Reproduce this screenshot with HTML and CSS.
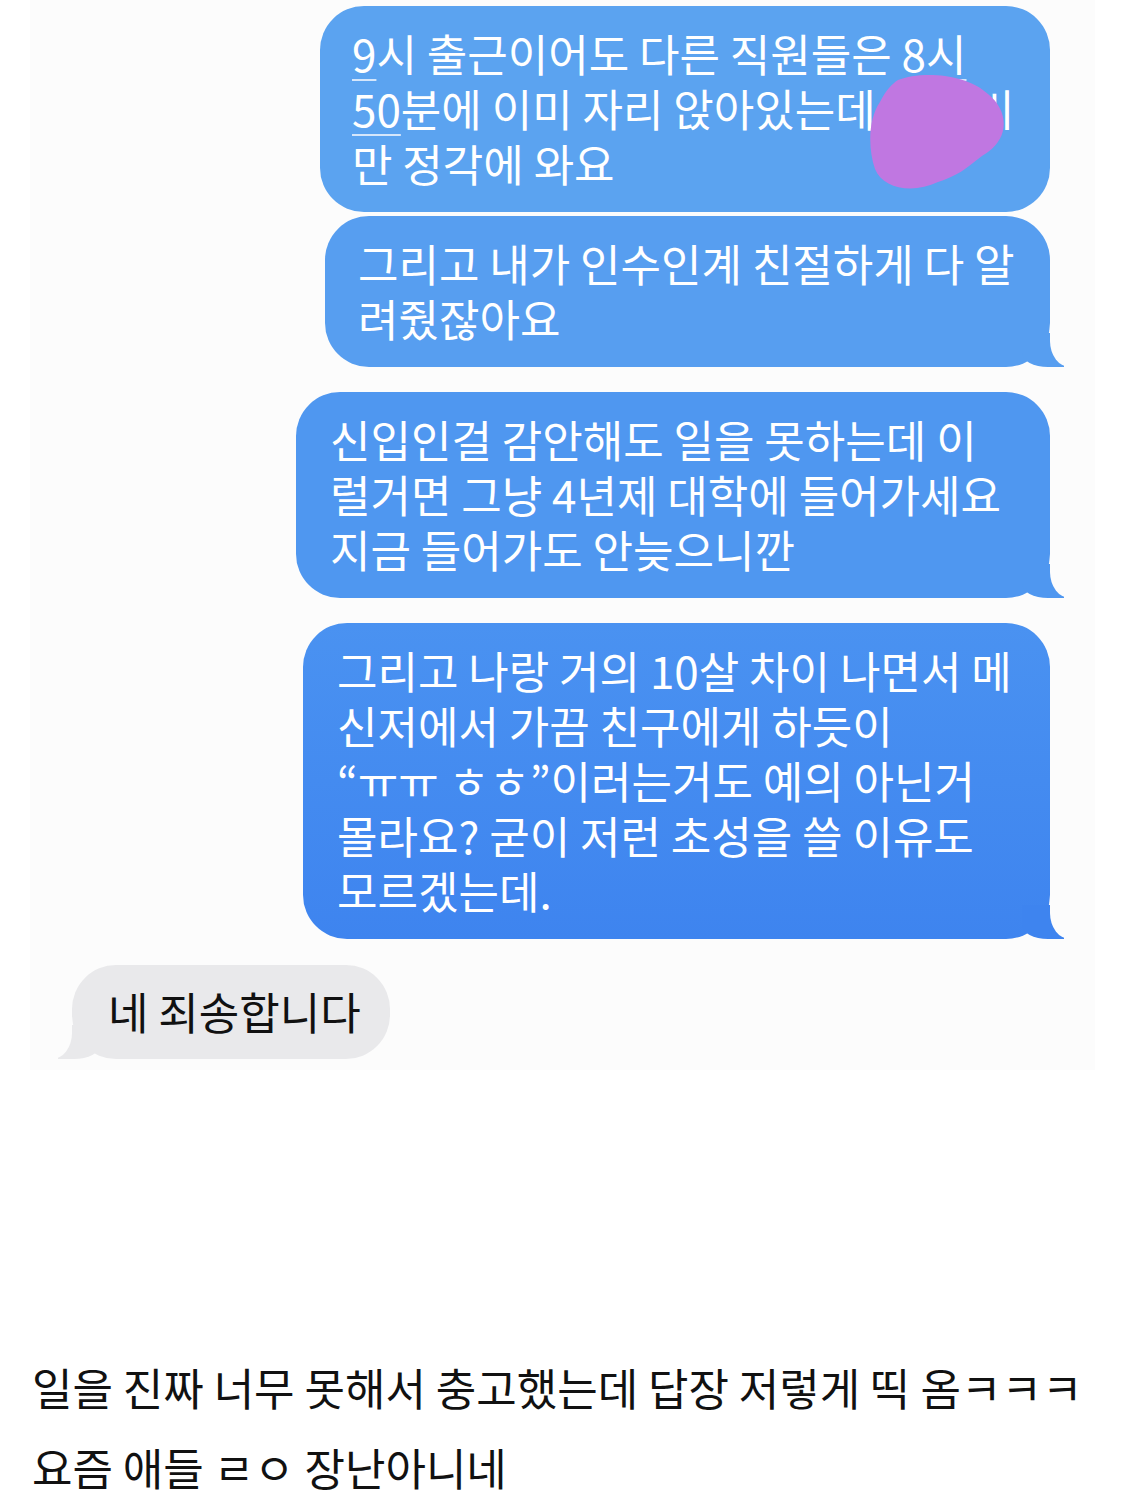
FILE: index.html
```html
<!DOCTYPE html>
<html>
<head>
    <title>메시지</title>
    <link rel="stylesheet" href="styles.css">
</head>
<body>
    <div class="shot">
        <div class="thread">
            <div class="bubble me m1">
                <span class="link">9</span>시 출근이어도 다른 직원들은 <span class="link">8시</span><br>
                <span class="link">50</span>분에 이미 자리 앉아있는데 ○○씨<br>
                만 정각에 와요
                <svg class="blot" width="140" height="124" viewBox="0 0 140 124">
                    <path d="M30 6 C52 -3 98 -1 120 20 C140 36 142 62 120 78 C104 88 96 100 70 108 C45 120 15 115 7 95 C0 75 0 45 12 28 C18 16 24 10 30 6 Z" fill="#c077e1"/>
                </svg>
            </div>
            <div class="bubble me m2 tail">
                그리고 내가 인수인계 친절하게 다 알<br>
                려줬잖아요
            </div>
            <div class="bubble me m3 tail">
                신입인걸 감안해도 일을 못하는데 이<br>
                럴거면 그냥 4년제 대학에 들어가세요<br>
                지금 들어가도 안늦으니깐
            </div>
            <div class="bubble me m4 tail">
                그리고 나랑 거의 10살 차이 나면서 메<br>
                신저에서 가끔 친구에게 하듯이<br>
                “ㅠㅠ ㅎㅎ”이러는거도 예의 아닌거<br>
                몰라요? 굳이 저런 초성을 쓸 이유도<br>
                모르겠는데.
            </div>
            <div class="bubble them">네 죄송합니다</div>
        </div>
    </div>

    <p class="caption">
        일을 진짜 너무 못해서 충고했는데 답장 저렇게 띡 옴ㅋㅋㅋ<br>
        요즘 애들 ㄹㅇ 장난아니네
    </p>
</body>
</html>
```

FILE: styles.css
```css
body {
    margin: 0;
    background-color: #fff;
    font-family: "Noto Sans CJK KR", "Noto Sans", sans-serif;
}

.shot {
    margin: 0 30px;
    height: 1070px;
    background-color: #fcfcfc;
}

.thread {
    display: flex;
    flex-direction: column;
    align-items: flex-end;
    padding: 6px 45px 0 42px;
}

.bubble {
    position: relative;
    box-sizing: border-box;
    font-size: 44px;
    line-height: 55px;
    white-space: nowrap;
    border-radius: 44px;
    padding: 20px 20px 21px 33px;
}

.me {
    color: #fff;
    --tail: #579ef0;
}

.m1 {
    width: 730px;
    background-color: #5ba3f0;
    padding-left: 32px;
}

.m2 {
    width: 725px;
    margin-top: 4px;
    background-color: #579ef0;
}

.m3 {
    width: 754px;
    margin-top: 25px;
    background-color: #4f97f0;
    padding-left: 34px;
    --tail: #4f97f0;
}

.m4 {
    width: 747px;
    margin-top: 25px;
    background: linear-gradient(#4a92f1, #3e84ef);
    padding-left: 34px;
    --tail: #3e84ef;
}

.link {
    text-decoration: underline;
    text-decoration-thickness: 2px;
    text-underline-offset: 7px;
    text-decoration-color: #d5e6fb;
}

.blot {
    position: absolute;
    top: 68px;
    right: 42px;
}

/* tail on my messages */
.tail::before {
    content: "";
    position: absolute;
    bottom: 0;
    right: -14px;
    width: 42px;
    height: 34px;
    background-color: var(--tail);
    border-bottom-left-radius: 26px 14px;
}

.tail::after {
    content: "";
    position: absolute;
    bottom: 0;
    right: -34px;
    width: 34px;
    height: 38px;
    background-color: #fcfcfc;
    border-bottom-left-radius: 20px 26px;
}

.them {
    align-self: flex-start;
    width: 318px;
    margin-top: 26px;
    padding: 19px 20px 20px 36px;
    background-color: #e9e9eb;
    color: #111;
}

.them::before {
    content: "";
    position: absolute;
    bottom: 0;
    left: -14px;
    width: 42px;
    height: 34px;
    background-color: #e9e9eb;
    border-bottom-right-radius: 26px 14px;
}

.them::after {
    content: "";
    position: absolute;
    bottom: 0;
    left: -34px;
    width: 34px;
    height: 38px;
    background-color: #fcfcfc;
    border-bottom-right-radius: 20px 26px;
}

.caption {
    margin: 277px 0 0 32px;
    font-size: 44px;
    line-height: 80px;
    color: #111;
    white-space: nowrap;
}
```
